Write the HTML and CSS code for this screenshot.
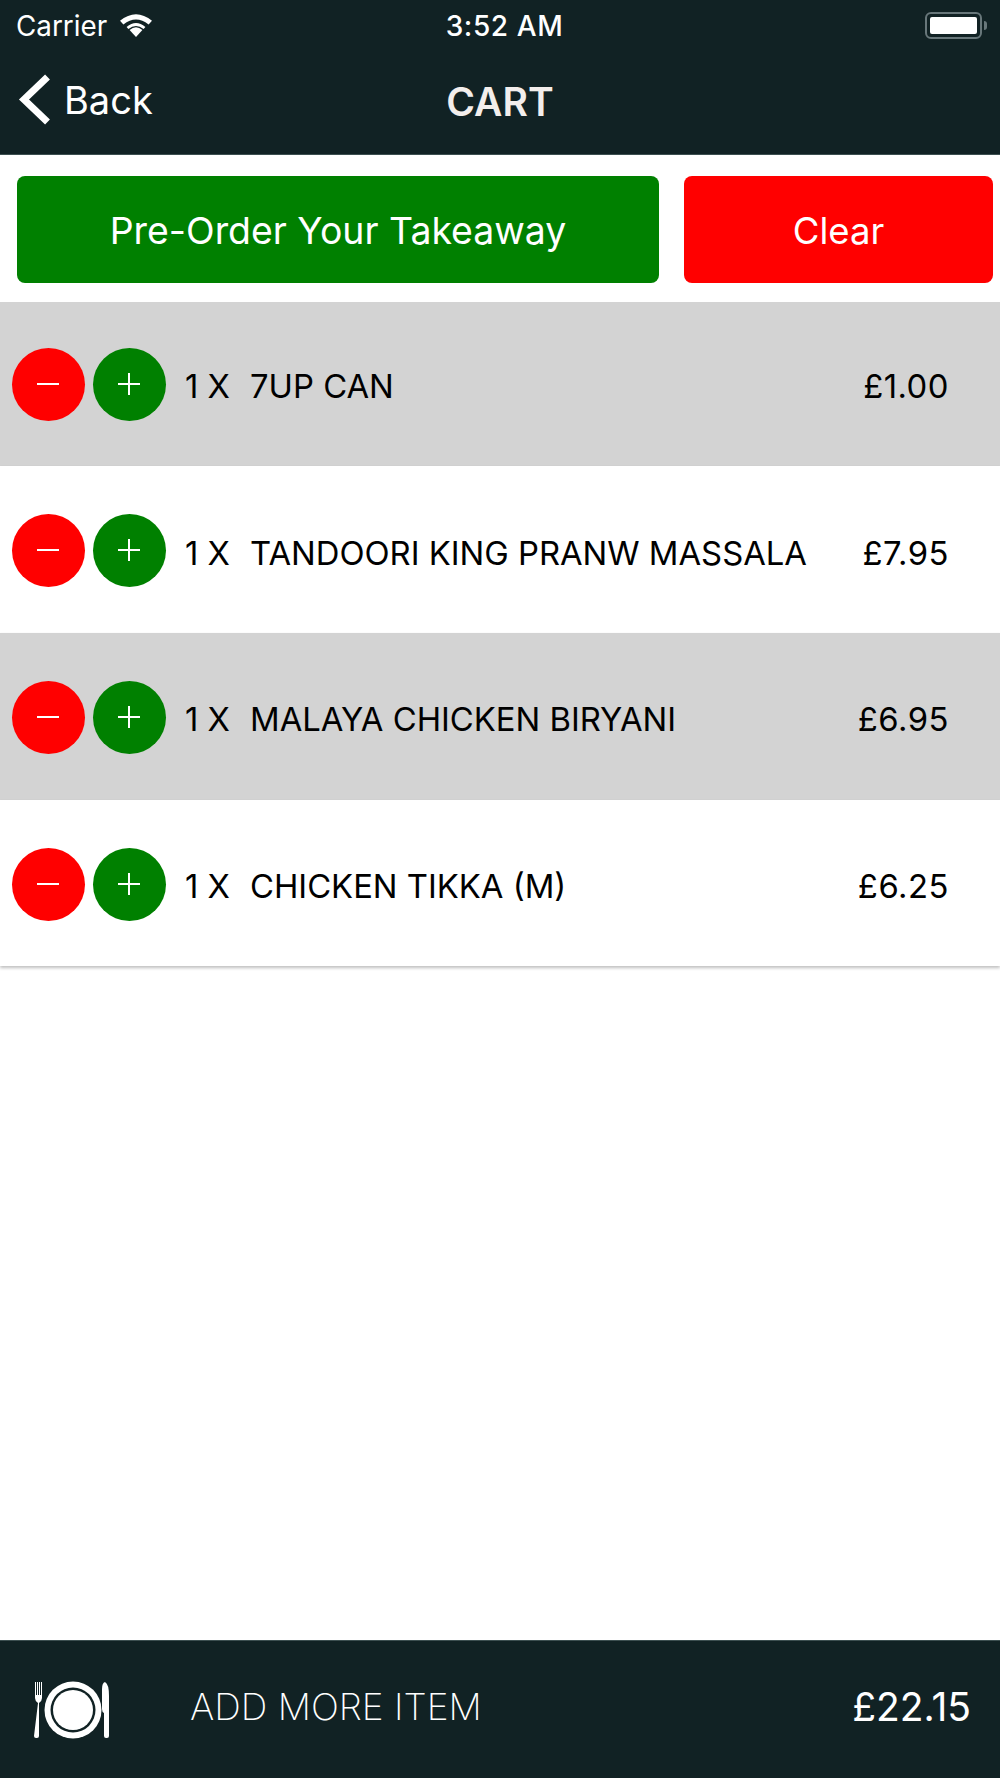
FILE: index.html
```html
<!DOCTYPE html>
<html lang="en">
<head>
    <meta charset="UTF-8">
    <meta name="viewport" content="width=device-width, initial-scale=1.0">
    <title>Cart</title>
    <link rel="stylesheet" href="styles.css">
</head>
<body>
    <div class="app">
        <div class="header">
            <div class="status-bar">
                <div class="status-left">
                    <span class="carrier">Carrier</span>
                    <svg class="wifi" width="34" height="25" viewBox="0 0 34 25">
                        <path d="M17 25 L10.6 18 Q17 12.6 23.4 18 Z" fill="#fff"/>
                        <path d="M7.6 15 Q17 7.2 26.4 15 L24.6 17 Q17 10.8 9.4 17 Z" fill="#fff"/>
                        <path d="M1 8.8 Q17 -4.2 33 8.8 L29.6 12.6 Q17 2.4 4.4 12.6 Z" fill="#fff"/>
                    </svg>
                </div>
                <div class="status-time">3:52 AM</div>
                <div class="status-right">
                    <div class="battery"><div class="battery-fill"></div></div>
                    <div class="battery-tip"></div>
                </div>
            </div>
            <div class="nav-bar">
                <div class="back">
                    <svg class="back-arrow" width="32" height="52" viewBox="0 0 32 52">
                        <path d="M29.500 3 L6 25.500 L29.500 48" fill="none" stroke="#fff" stroke-width="7"/>
                    </svg>
                    <span>Back</span>
                </div>
                <div class="nav-title">CART</div>
            </div>
        </div>

        <div class="actions">
            <button class="btn btn-order">Pre-Order Your Takeaway</button>
            <button class="btn btn-clear">Clear</button>
        </div>

        <div class="cart-list">
            <div class="cart-row row-grey">
                <div class="qty qty-minus"><span class="bar-h"></span></div>
                <div class="qty qty-plus"><span class="bar-h"></span><span class="bar-v"></span></div>
                <div class="item-count">1 X</div>
                <div class="item-name">7UP CAN</div>
                <div class="item-price">£1.00</div>
            </div>
            <div class="cart-row">
                <div class="qty qty-minus"><span class="bar-h"></span></div>
                <div class="qty qty-plus"><span class="bar-h"></span><span class="bar-v"></span></div>
                <div class="item-count">1 X</div>
                <div class="item-name">TANDOORI KING PRANW MASSALA</div>
                <div class="item-price">£7.95</div>
            </div>
            <div class="cart-row row-grey">
                <div class="qty qty-minus"><span class="bar-h"></span></div>
                <div class="qty qty-plus"><span class="bar-h"></span><span class="bar-v"></span></div>
                <div class="item-count">1 X</div>
                <div class="item-name">MALAYA CHICKEN BIRYANI</div>
                <div class="item-price">£6.95</div>
            </div>
            <div class="cart-row">
                <div class="qty qty-minus"><span class="bar-h"></span></div>
                <div class="qty qty-plus"><span class="bar-h"></span><span class="bar-v"></span></div>
                <div class="item-count">1 X</div>
                <div class="item-name">CHICKEN TIKKA (M)</div>
                <div class="item-price">£6.25</div>
            </div>
        </div>

        <div class="footer">
            <svg class="plate-icon" width="78" height="58" viewBox="0 0 78 58">
                <!-- fork -->
                <path d="M1 1 h1 v13 h1 V1 h1 v13 h1 V1 h1 v13 h1 V1 h1 v16 q0 3 -3 5 l0 33 q0 2 -2 2 h-1 q-2 0 -2 -2 L4 22 q-3 -2 -3 -5 Z" fill="#fff"/>
                <!-- plate -->
                <circle cx="39" cy="29" r="28.500" fill="#fff"/>
                <circle cx="39" cy="29" r="22.500" fill="#112224"/>
                <circle cx="39" cy="29" r="20" fill="#fff"/>
                <!-- knife -->
                <path d="M71 1 q4 2 4 14 v40 q0 2 -2 2 h-1 q-2 0 -2 -2 V32 q-2 -1 -2 -4 V8 q0 -6 3 -7 Z" fill="#fff"/>
            </svg>
            <div class="footer-label">ADD MORE ITEM</div>
            <div class="footer-total">£22.15</div>
        </div>
    </div>
</body>
</html>
```

FILE: styles.css
```css
body {
    margin: 0;
    padding: 0;
    background-color: #fff;
    font-family: Inter, "Liberation Sans", sans-serif;
}
.app {
    width: 1000px;
    height: 1778px;
    display: flex;
    flex-direction: column;
    overflow: hidden;
}
.header {
    height: 154px;
    background-color: #112224;
    border-bottom: 1px solid #3c4f50;
    color: #fff;
}
.status-bar {
    height: 51px;
    padding: 0 13px 0 16px;
    display: flex;
    align-items: center;
    justify-content: space-between;
    position: relative;
}
.status-left {
    display: flex;
    align-items: center;
    gap: 12px;
    font-size: 27.800px;
}
.status-time {
    position: absolute;
    left: 9px;
    right: 0;
    text-align: center;
    font-size: 28px;
    font-weight: 500;
    letter-spacing: 0.600px;
}
.status-right {
    display: flex;
    align-items: center;
    gap: 2px;
}
.wifi {
    margin-top: -3px;
}
.battery {
    width: 57px;
    height: 27px;
    box-sizing: border-box;
    border: 2px solid #68777a;
    border-radius: 6px;
    padding: 3px;
}
.battery-fill {
    height: 100%;
    background-color: #fff;
    border-radius: 2px;
}
.battery-tip {
    width: 3px;
    height: 9px;
    background-color: #68777a;
    border-radius: 0 3px 3px 0;
}
.nav-bar {
    height: 103px;
    display: flex;
    align-items: center;
    position: relative;
}
.back {
    display: flex;
    align-items: center;
    gap: 14px;
    margin-left: 18px;
    font-size: 38px;
    margin-top: -5px;
}
.nav-title {
    position: absolute;
    left: 0;
    right: 0;
    top: 27px;
    text-align: center;
    font-size: 39px;
    font-weight: 600;
    color: #f3eeec;
}
.actions {
    display: flex;
    gap: 25px;
    padding: 21px 7px 0 17px;
    height: 147px;
    box-sizing: border-box;
    background-color: #fff;
    position: relative;
    z-index: 1;
}
.btn {
    height: 107px;
    border: none;
    border-radius: 8px;
    padding: 2px 0 0;
    color: #fff;
    font-family: inherit;
    font-size: 37.400px;
}
.btn-order {
    width: 642px;
    background-color: #008000;
}
.btn-clear {
    width: 309px;
    background-color: #ff0000;
    font-size: 36.500px;
}
.cart-list {
    flex: 1;
    margin-top: -2.300px;
}
.cart-row {
    height: 166.700px;
    box-sizing: border-box;
    display: flex;
    align-items: center;
    padding-left: 12px;
    padding-top: 2px;
    box-shadow: 0 2px 3px rgba(0, 0, 0, 0.25);
    background-color: #fff;
    position: relative;
    color: #000;
    font-size: 32.800px;
}
.row-grey {
    background-color: #d3d3d3;
}
.qty {
    width: 73px;
    height: 73px;
    border-radius: 50%;
    position: relative;
    flex-shrink: 0;
}
.qty-minus {
    background-color: #ff0000;
    margin-right: 8px;
}
.qty-plus {
    background-color: #008000;
}
.bar-h {
    position: absolute;
    left: 25px;
    top: 35px;
    width: 22px;
    height: 2px;
    background-color: #fff;
}
.bar-v {
    position: absolute;
    left: 35px;
    top: 25px;
    width: 2px;
    height: 22px;
    background-color: #fff;
}
.item-count {
    width: 65px;
    margin-left: 19px;
    padding-top: 4px;
    flex-shrink: 0;
}
.item-name {
    flex: 1;
    padding-top: 4px;
}
.item-price {
    margin-right: 51px;
    padding-top: 4px;
    letter-spacing: 0.500px;
}
.footer {
    height: 138px;
    background-color: #112224;
    border-top: 1px solid #3c4f50;
    box-sizing: border-box;
    display: flex;
    align-items: center;
    color: #fff;
}
.plate-icon {
    margin-left: 34px;
    flex-shrink: 0;
}
.footer-label {
    margin-left: 78px;
    margin-bottom: 6px;
    flex: 1;
    font-size: 37px;
    font-weight: 200;
}
.footer-total {
    margin-right: 29px;
    margin-bottom: 6px;
    font-size: 39px;
}
```
